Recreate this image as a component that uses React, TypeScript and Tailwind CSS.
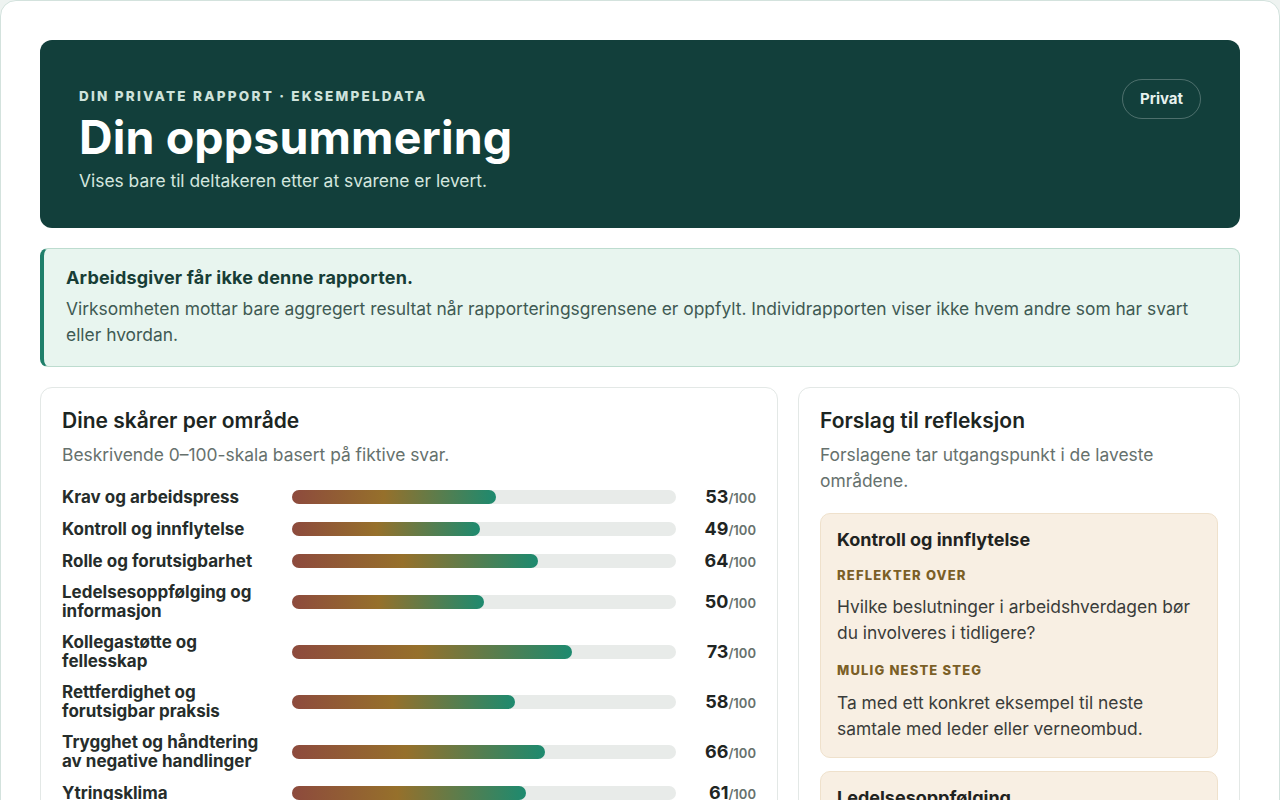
import React from 'react';

const scores = [
  { label: 'Krav og arbeidspress', value: 53 },
  { label: 'Kontroll og innflytelse', value: 49 },
  { label: 'Rolle og forutsigbarhet', value: 64 },
  { label: 'Ledelsesoppfølging og informasjon', value: 50 },
  { label: 'Kollegastøtte og fellesskap', value: 73 },
  { label: 'Rettferdighet og forutsigbar praksis', value: 58 },
  { label: 'Trygghet og håndtering av negative handlinger', value: 66 },
  { label: 'Ytringsklima', value: 61 },
  { label: 'Mestring og energi', value: 57 },
];

const suggestions = [
  {
    area: 'Kontroll og innflytelse',
    reflect: 'Hvilke beslutninger i arbeidshverdagen bør du involveres i tidligere?',
    next: 'Ta med ett konkret eksempel til neste samtale med leder eller verneombud.',
  },
  {
    area: 'Ledelsesoppfølging',
    reflect: 'Hvilken informasjon mangler du oftest for å gjøre jobben godt?',
    next: 'Be om en fast avklaring av prioriteringer i neste medarbeidersamtale.',
  },
];

export default function App() {
  return (
    <div className="min-h-screen bg-[#eef3f1] font-['Inter',sans-serif] text-[#1c2522]">
      <div className="rounded-2xl border border-[#d3e2dd] bg-white px-[39px] pt-[39px] pb-10">
        <header className="flex items-start justify-between rounded-xl bg-[#123f3b] px-[39px] pt-[39px] pb-[35px] text-white">
          <div className="pt-[9px]">
            <p className="text-[13.5px] font-extrabold uppercase leading-4 tracking-[0.165em] text-[#cfe3dc]">
              Din private rapport · Eksempeldata
            </p>
            <h1 className="mt-[7px] text-[46.5px] font-bold leading-[52px] tracking-[0.003em]">Din oppsummering</h1>
            <p className="mt-[6px] text-[17.4px] leading-6 text-[#d4e6df]">Vises bare til deltakeren etter at svarene er levert.</p>
          </div>
          <span className="rounded-full border border-white/25 px-[17px] py-[9px] text-[15px] font-bold leading-5 text-[#e6f2ee]">
            Privat
          </span>
        </header>

        <section className="mt-5 rounded-lg border border-[#bddccf] border-l-4 border-l-[#1f7f6a] bg-[#e8f5ef] px-[22px] pt-[17px] pb-[18px]">
          <p className="text-[18px] font-bold leading-6 tracking-[0.01em] text-[#173d36]">Arbeidsgiver får ikke denne rapporten.</p>
          <p className="mt-[6px] text-[17.4px] leading-[26px] text-[#3f5a53]">
            Virksomheten mottar bare aggregert resultat når rapporteringsgrensene er oppfylt. Individrapporten viser ikke hvem andre som har svart eller hvordan.
          </p>
        </section>

        <div className="mt-5 grid grid-cols-[738px_1fr] gap-5">
          <section className="rounded-xl border border-[#e3e8e6] bg-white px-[21px] pt-[19px] pb-6">
            <h2 className="text-[21px] font-semibold leading-7">Dine skårer per område</h2>
            <p className="mt-[7px] text-[17.4px] leading-[26px] text-[#66716d]">Beskrivende 0–100-skala basert på fiktive svar.</p>
            <div className="mt-[19px] flex flex-col gap-3">
              {scores.map((s) => (
                <div key={s.label} className="grid grid-cols-[210px_1fr_60px] items-center gap-5">
                  <span className="text-[17px] font-bold leading-[19px] text-[#262d2b]">{s.label}</span>
                  <div className="h-[14px] rounded-full bg-[#e8ebe9]">
                    <div
                      className="h-full rounded-full bg-[linear-gradient(90deg,#8d4a3d_0%,#96702b_45%,#1d8a6f_100%)]"
                      style={{ width: `${s.value}%` }}
                    />
                  </div>
                  <span className="flex h-5 items-baseline justify-end text-[18px] font-bold leading-5 text-[#1f2523]">
                    {s.value}
                    <span className="text-[13px] font-semibold text-[#67716d]">/100</span>
                  </span>
                </div>
              ))}
            </div>
          </section>

          <section className="rounded-xl border border-[#e3e8e6] bg-white px-[21px] pt-[19px] pb-6">
            <h2 className="text-[21px] font-semibold leading-7">Forslag til refleksjon</h2>
            <p className="mt-[7px] text-[17.4px] leading-[26px] text-[#66716d]">
              Forslagene tar utgangspunkt i de laveste områdene.
            </p>
            <div className="mt-[19px] flex flex-col gap-[13px]">
              {suggestions.map((s) => (
                <div key={s.area} className="rounded-[10px] border border-[#efe1cc] bg-[#f8efe3] px-4 pt-[14px] pb-[15px]">
                  <h3 className="text-[18px] font-bold leading-6 text-[#1f2321]">{s.area}</h3>
                  <p className="mt-[14px] text-[13px] font-extrabold uppercase leading-[18px] tracking-[0.09em] text-[#7b5f27]">Reflekter over</p>
                  <p className="mt-[10px] text-[17.4px] leading-[26px] text-[#3a3c3a]">{s.reflect}</p>
                  <p className="mt-[15px] text-[13px] font-extrabold uppercase leading-[18px] tracking-[0.09em] text-[#7b5f27]">Mulig neste steg</p>
                  <p className="mt-[11px] text-[17.4px] leading-[26px] text-[#3a3c3a]">{s.next}</p>
                </div>
              ))}
            </div>
          </section>
        </div>
      </div>
    </div>
  );
}
